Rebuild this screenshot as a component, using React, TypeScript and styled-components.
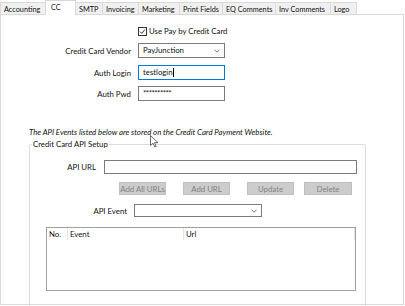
import React from 'react';
import styled, { createGlobalStyle } from 'styled-components';

const GlobalStyle = createGlobalStyle`
  html, body {
    margin: 0;
    padding: 0;
    background: #ffffff;
  }
  body {
    font-family: Lato, 'Open Sans', sans-serif;
    font-size: 7.8px;
    color: #111;
  }
`;

const tabs = [
  { label: 'Accounting', width: 46 },
  { label: 'CC', width: 31 },
  { label: 'SMTP', width: 28 },
  { label: 'Invoicing', width: 37 },
  { label: 'Marketing', width: 42 },
  { label: 'Print Fields', width: 44 },
  { label: 'EQ Comments', width: 54 },
  { label: 'Inv Comments', width: 56 },
  { label: 'Logo', width: 27 },
];

const Page = styled.div`
  width: 405px;
  height: 306px;
  position: relative;
  overflow: hidden;
`;

const TabStrip = styled.div`
  display: flex;
  align-items: flex-end;
  height: 15px;
`;

const Tab = styled.div<{ $active?: boolean; $w: number }>`
  width: ${(p) => p.$w}px;
  height: ${(p) => (p.$active ? 15 : 13)}px;
  box-sizing: border-box;
  padding-left: ${(p) => (p.$active ? 5 : 3)}px;
  padding-top: 1px;
  font-size: 7.3px;
  line-height: 11px;
  background: ${(p) => (p.$active ? '#ffffff' : '#f0f0f0')};
  border: 1px solid #d9d9d9;
  border-bottom: ${(p) => (p.$active ? 'none' : '1px solid #d9d9d9')};
  margin-right: -1px;
  position: relative;
  z-index: ${(p) => (p.$active ? 2 : 1)};
  white-space: nowrap;
`;

const Panel = styled.div`
  width: 404px;
  height: 291px;
  box-sizing: border-box;
  margin-top: -1px;
  border: 1px solid #d9d9d9;
  background: #fff;
`;

const TopForm = styled.div`
  display: grid;
  grid-template-columns: 130px 87px;
  column-gap: 7px;
  padding-top: 10px;
  align-items: center;
`;

const CheckRow = styled.label`
  grid-column: 2 / span 1;
  display: flex;
  align-items: center;
  gap: 2px;
  height: 12px;
  margin-bottom: 6px;
  white-space: nowrap;
`;

const CheckBox = styled.span`
  width: 9px;
  height: 9px;
  box-sizing: border-box;
  border: 1px solid #333;
  display: flex;
  align-items: center;
  justify-content: center;
`;

const Label = styled.div`
  text-align: right;
  white-space: nowrap;
`;

const Field = styled.div<{ $focused?: boolean; $w?: number; $h?: number }>`
  width: ${(p) => (p.$w ? `${p.$w}px` : '100%')};
  height: ${(p) => p.$h ?? 15}px;
  box-sizing: border-box;
  border: 1px solid ${(p) => (p.$focused ? '#0078d7' : '#7a7a7a')};
  background: #fff;
  display: flex;
  align-items: center;
  justify-content: space-between;
  padding: 0 4px;
  line-height: 1;
`;

const Caret = styled.span`
  width: 1px;
  height: 9px;
  background: #000;
`;

const FieldRow = styled.div`
  display: contents;
`;

const Spacer = styled.div<{ $h: number }>`
  grid-column: 1 / span 2;
  height: ${(p) => p.$h}px;
`;

const Note = styled.div`
  font-style: italic;
  margin: 26px 0 0 28px;
  height: 11px;
  line-height: 11px;
  white-space: nowrap;
`;

const Group = styled.fieldset`
  margin: 1px 0 0 28px;
  width: 337px;
  height: 168px;
  box-sizing: border-box;
  border: 1px solid #dcdcdc;
  border-radius: 2px;
  padding: 0;
  min-width: 0;
`;

const Legend = styled.legend`
  padding: 0 1px;
  margin-left: 2px;
  line-height: 10px;
`;

const UrlRow = styled.div`
  display: flex;
  align-items: center;
  margin-top: 11px;
`;

const GroupLabel = styled.div<{ $w: number }>`
  width: ${(p) => p.$w}px;
  text-align: right;
  white-space: nowrap;
`;

const ButtonRow = styled.div`
  display: flex;
  margin: 8px 0 0 89px;
`;

const Button = styled.div<{ $gap: number; $w?: number }>`
  width: ${(p) => p.$w ?? 47}px;
  height: 13px;
  box-sizing: border-box;
  margin-right: ${(p) => p.$gap}px;
  background: #cccccc;
  border: 1px solid #bfbfbf;
  color: #838383;
  display: flex;
  align-items: center;
  justify-content: center;
  white-space: nowrap;
`;

const EventRow = styled.div`
  display: flex;
  align-items: center;
  margin-top: 9px;
`;

const ListBox = styled.div`
  margin: 10px 0 0 16px;
  width: 310px;
  height: 64px;
  box-sizing: border-box;
  border: 1px solid #a0a0a0;
  background: #fff;
`;

const ListHeader = styled.div`
  display: flex;
  height: 12px;
  align-items: center;
`;

const HeaderCell = styled.div<{ $w: number }>`
  width: ${(p) => p.$w}px;
  height: 12px;
  line-height: 12px;
  box-sizing: border-box;
  padding-left: 2px;
  border-right: 1px solid #e5e5e5;
  white-space: nowrap;
`;

const Chevron = () => (
  <svg width="6" height="4" viewBox="0 0 6 4">
    <path d="M0.5 0.8 L3 3.2 L5.5 0.8" fill="none" stroke="#555" strokeWidth="0.8" />
  </svg>
);

const Pointer = styled.svg`
  position: absolute;
  left: 150px;
  top: 135px;
`;

const App: React.FC = () => (
  <Page>
    <GlobalStyle />
    <TabStrip>
      {tabs.map((t) => (
        <Tab key={t.label} $w={t.width} $active={t.label === 'CC'}>
          {t.label}
        </Tab>
      ))}
    </TabStrip>
    <Panel>
      <TopForm>
        <CheckRow>
          <CheckBox>
            <svg width="7" height="7" viewBox="0 0 7 7">
              <path d="M1 3.6 L2.8 5.4 L6 1.4" fill="none" stroke="#222" strokeWidth="0.9" />
            </svg>
          </CheckBox>
          Use Pay by Credit Card
        </CheckRow>
        <FieldRow>
          <Label>Credit Card Vendor</Label>
          <Field>
            <span>PayJunction</span>
            <Chevron />
          </Field>
        </FieldRow>
        <Spacer $h={7} />
        <FieldRow>
          <Label>Auth Login</Label>
          <Field $focused>
            <span style={{ display: 'flex', alignItems: 'center' }}>
              testlogin
              <Caret />
            </span>
          </Field>
        </FieldRow>
        <Spacer $h={6} />
        <FieldRow>
          <Label>Auth Pwd</Label>
          <Field>
            <span style={{ letterSpacing: '-0.5px' }}>**********</span>
          </Field>
        </FieldRow>
      </TopForm>
      <Note>The API Events listed below are stored on the Credit Card Payment Website.</Note>
      <Group>
        <Legend>Credit Card API Setup</Legend>
        <UrlRow>
          <GroupLabel $w={66}>API URL</GroupLabel>
          <Field $w={253} $h={14} style={{ marginLeft: 8 }} />
        </UrlRow>
        <ButtonRow>
          <Button $gap={17}>Add All URLs</Button>
          <Button $gap={17}>Add URL</Button>
          <Button $gap={10}>Update</Button>
          <Button $gap={0} $w={48}>Delete</Button>
        </ButtonRow>
        <EventRow>
          <GroupLabel $w={97}>API Event</GroupLabel>
          <Field $w={128} $h={13} style={{ marginLeft: 7 }}>
            <span />
            <Chevron />
          </Field>
        </EventRow>
        <ListBox>
          <ListHeader>
            <HeaderCell $w={21}>No.</HeaderCell>
            <HeaderCell $w={116}>Event</HeaderCell>
            <HeaderCell $w={171}>Url</HeaderCell>
          </ListHeader>
        </ListBox>
      </Group>
    </Panel>
    <Pointer width="9" height="13" viewBox="0 0 9 13">
      <path d="M0.5 0.5 L0.5 10.5 L3 8.2 L4.8 12 L6.2 11.4 L4.5 7.7 L8 7.7 Z" fill="#fff" stroke="#444" strokeWidth="0.8" />
    </Pointer>
  </Page>
);

export default App;
